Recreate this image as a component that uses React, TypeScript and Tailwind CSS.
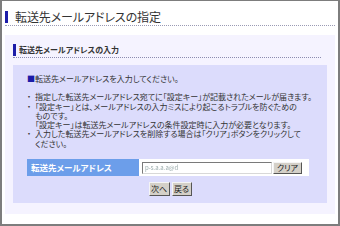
const jp = "font-['Noto_Sans_CJK_JP',sans-serif]";

export default function App() {
  return (
    <div className={`${jp} flex h-[226px] w-[340px] flex-col border-x-2 border-b-2 border-t border-[#7d7d7d] bg-white text-[#333]`}>
      {/* title */}
      <div className="mx-[3px] mt-[9px] flex items-center border-b border-dotted border-[#9a9ab4] pb-[1px]">
        <div className="h-[12px] w-[3px] bg-[#1c1ca8]" />
        <h1 className="ml-[7px] text-[12px] leading-[14px] tracking-[-0.1px] [font-feature-settings:'palt']">
          転送先メールアドレスの指定
        </h1>
      </div>

      {/* panel */}
      <div className="mx-[3px] mt-[9px] bg-[#f5f3ff] px-[8px] pb-[11px] pt-[9px]">
        <div className="mr-[6px] flex items-center border-b border-dotted border-[#8c8cb0] pb-[1px]">
          <div className="h-[12px] w-[3px] bg-[#1c1ca8]" />
          <h2 className="ml-[3px] text-[8px] font-bold leading-[12px] [font-feature-settings:'palt']">
            転送先メールアドレスの入力
          </h2>
        </div>

        <div className="mt-[7px] bg-[#dcdcfc] px-[14px] pb-[7px] pt-[9px] text-[8px] leading-[9.3px] [font-feature-settings:'palt']">
          <p>
            <span className="text-[#1c1ca8]">■</span>転送先メールアドレスを入力してください。
          </p>
          <ul className="mt-[9px]">
            <li className="flex">
              <span className="w-[8px] shrink-0">・</span>
              <span>指定した転送先メールアドレス宛てに「設定キー」が記載されたメールが届きます。</span>
            </li>
            <li className="flex">
              <span className="w-[8px] shrink-0">・</span>
              <span>
                「設定キー」とは、メールアドレスの入力ミスにより起こるトラブルを防ぐための
                <br />
                ものです。
                <br />
                「設定キー」は転送先メールアドレスの条件設定時に入力が必要となります。
              </span>
            </li>
            <li className="flex">
              <span className="w-[8px] shrink-0">・</span>
              <span>
                入力した転送先メールアドレスを削除する場合は「クリア」ボタンをクリックして
                <br />
                ください。
              </span>
            </li>
          </ul>

          <div className="mt-[11px] flex h-[17px] w-[282px]">
            <div className="flex w-[112px] items-center bg-[#6c9eea] pl-[4px] text-[8.5px] font-bold text-white">
              転送先メールアドレス
            </div>
            <div className="flex flex-1 items-center bg-white pl-[3px]">
              <div className="flex h-[12px] w-[130px] items-center border border-[#7a7a7a] border-b-[#d8d8d8] border-r-[#d8d8d8] pl-[2px] text-[6px] text-[#9aa] blur-[0.4px]">
                p-s.a.a.a@d
              </div>
              <button className="ml-[1px] h-[12px] w-[29px] border border-[#f4f4f4] border-b-[#555] border-r-[#555] bg-[#d4d0c8] text-[8px] leading-[10px] text-[#222]">
                クリア
              </button>
            </div>
          </div>

          <div className="mt-[6px] flex justify-center gap-[2px]">
            <button className="h-[14px] w-[21px] border border-[#f4f4f4] border-b-[#555] border-r-[#555] bg-[#d4d0c8] text-[8px] leading-[12px] text-[#222]">
              次へ
            </button>
            <button className="h-[14px] w-[20px] border border-[#f4f4f4] border-b-[#555] border-r-[#555] bg-[#d4d0c8] text-[8px] leading-[12px] text-[#222]">
              戻る
            </button>
          </div>
        </div>
      </div>
    </div>
  );
}
